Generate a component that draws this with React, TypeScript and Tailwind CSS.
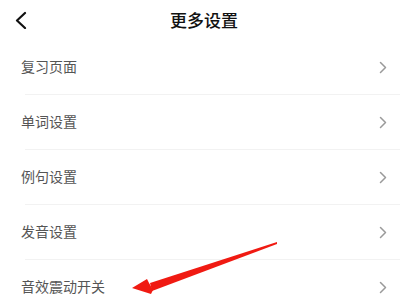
import React from 'react';

const items = ['复习页面', '单词设置', '例句设置', '发音设置', '音效震动开关'];

const App: React.FC = () => {
  return (
    <div
      className="relative w-[400px] h-[304px] overflow-hidden bg-white"
      style={{ fontFamily: '"Noto Sans CJK SC", "Noto Sans", sans-serif' }}
    >
      {/* 顶部导航 */}
      <div className="relative h-[40px] flex items-center justify-center">
        <svg className="absolute left-[14px] top-[11px]" width="14" height="18" viewBox="0 0 14 18">
          <path d="M11 2 L3 9.5 L11 17" fill="none" stroke="#111" strokeWidth="2.2" strokeLinecap="round" strokeLinejoin="round" />
        </svg>
        <span className="pl-[8px] pb-[1px] text-[17px] font-medium text-[#111] leading-none">更多设置</span>
      </div>

      {/* 设置列表 */}
      <div className="flex flex-col">
        {items.map((item, i) => (
          <div key={item} className="relative h-[55px] flex items-center justify-between pl-[21px] pr-[13px]">
            <span className="pb-[4px] text-[14px] text-[#555] leading-none">{item}</span>
            <svg width="8" height="13" viewBox="0 0 8 13">
              <path d="M1.5 1.5 L6.5 6.5 L1.5 11.5" fill="none" stroke="#9a9a9a" strokeWidth="1.5" strokeLinecap="round" strokeLinejoin="round" />
            </svg>
            {i < items.length - 1 && (
              <div className="absolute left-[25px] right-0 bottom-0 h-px bg-[#f2f2f2]" />
            )}
          </div>
        ))}
      </div>

      {/* 红色箭头标注 */}
      <svg className="absolute left-0 top-0" width="400" height="304" viewBox="0 0 400 304">
        <polygon points="277,242 150,283 152,291 277,244" fill="#f01a12" />
        <polygon points="132,288 147,279 149,283 153,290 151,294" fill="#f01a12" />
      </svg>
    </div>
  );
};

export default App;
